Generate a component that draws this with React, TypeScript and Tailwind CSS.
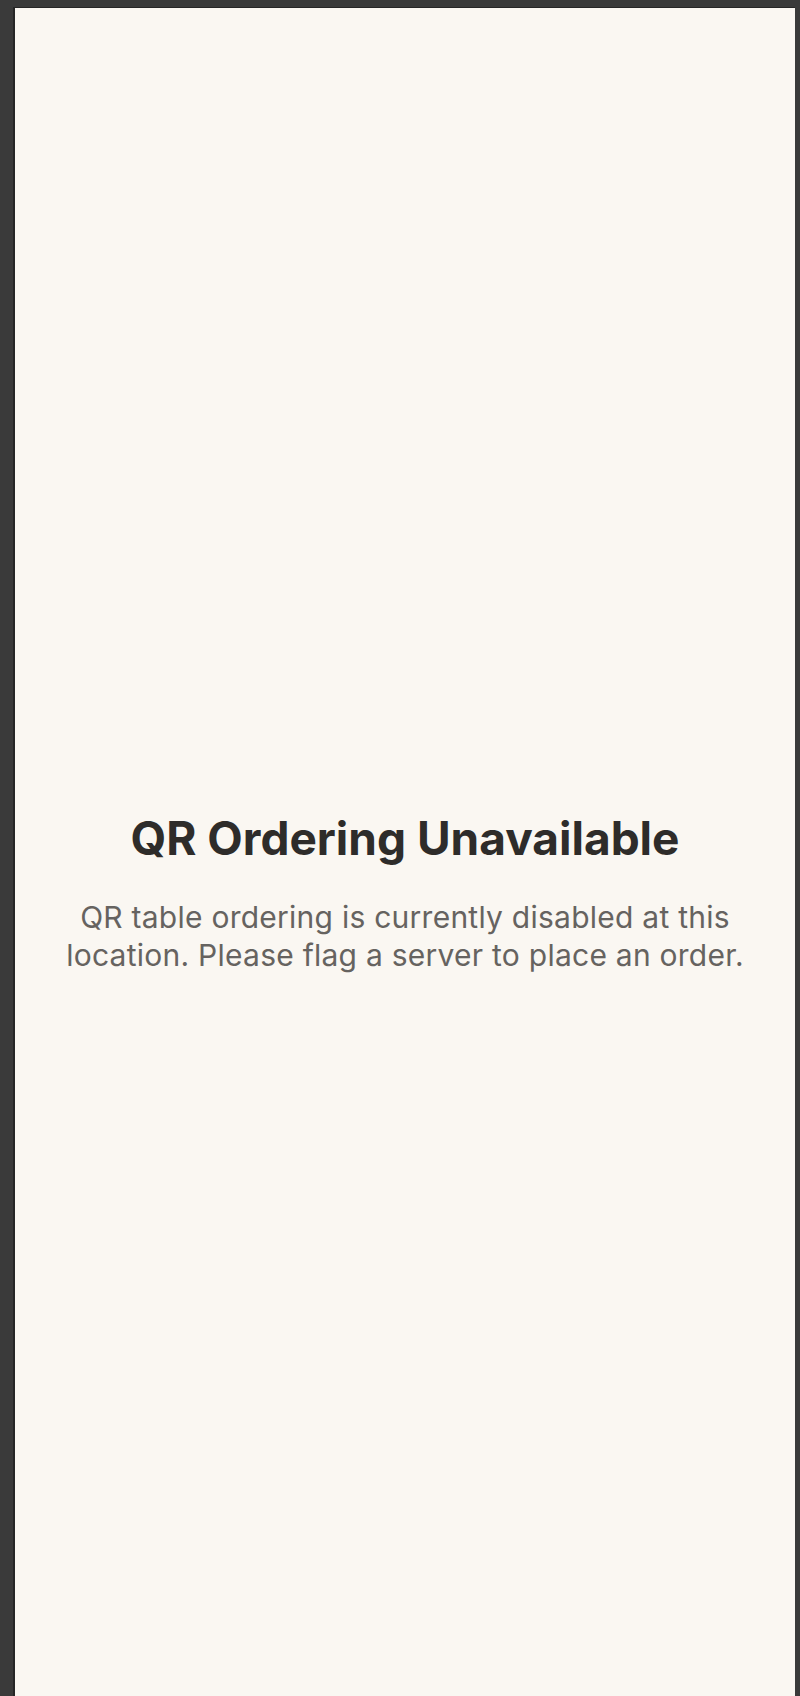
export default function App() {
  return (
    <div className="h-[1696px] w-[800px] bg-[#3a3a3a] pl-[13px] pt-[7px] pr-[5px]">
      <div
        className="flex h-full flex-col items-center justify-center border-l-2 border-t border-[#262626] bg-[#faf7f2] px-10 pt-[79px] text-center"
        style={{ fontFamily: "Inter, 'Noto Sans', sans-serif" }}
      >
        <h1 className="text-[46px] font-bold leading-[57px] text-[#2e2c2a]">
          QR Ordering Unavailable
        </h1>
        <p className="mt-[31px] max-w-[720px] text-[30px] leading-[38px] tracking-[0.25px] text-[#666360]">
          QR table ordering is currently disabled at this location. Please flag
          a server to place an order.
        </p>
      </div>
    </div>
  );
}
